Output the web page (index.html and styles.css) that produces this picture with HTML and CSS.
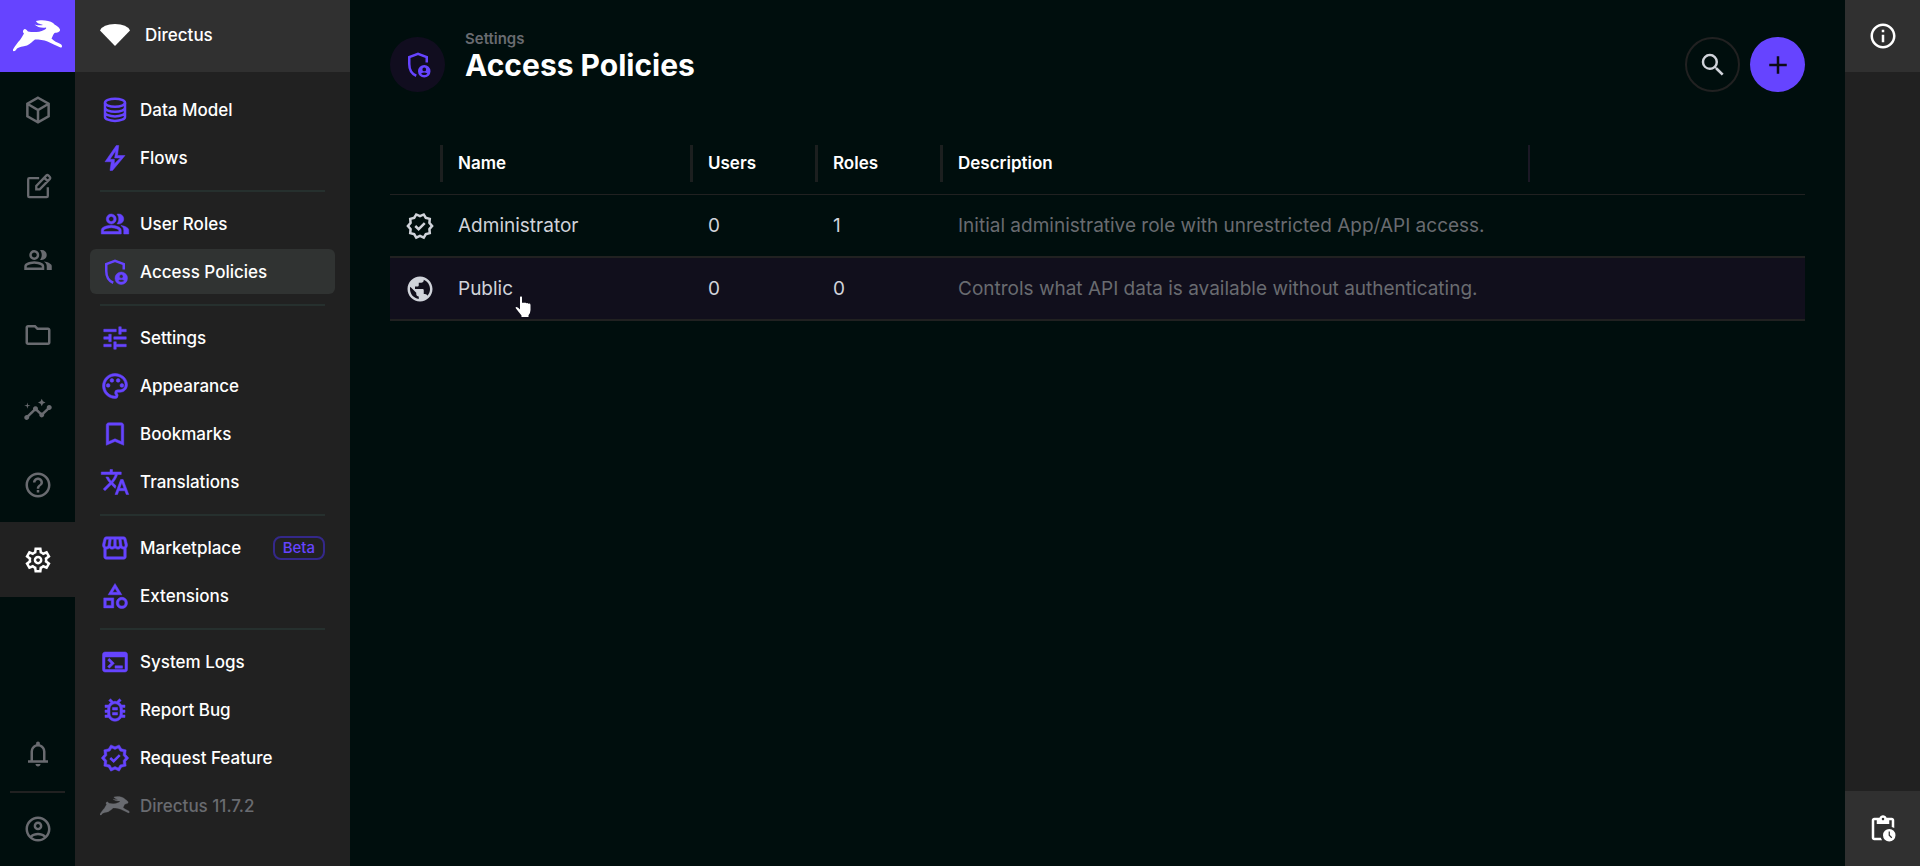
FILE: index.html
```html
<!DOCTYPE html>
<html lang="en">
<head>
    <meta charset="UTF-8">
    <meta name="viewport" content="width=device-width, initial-scale=1.0">
    <title>Access Policies</title>
    <link rel="stylesheet" href="styles.css">
</head>
<body>
    <svg class="sprite" aria-hidden="true">
        <symbol id="rabbit" viewBox="0 0 50 32">
            <path d="M0 29.500C2 26 5 22 7 20 9 17 10 15 11 13.500 9.500 12.500 9.500 9.500 12 9 13.500 9.500 14 10.500 15 11.500 20 12.500 26 12.500 31 10 33 9 33.500 8 33 7.500 29 8.500 24 7 21.500 4.500 25 5.500 28 5.500 30 5 27 4 23.500 3 23 1 27-.5 36-.2 40 3 42 5.500 46 6.500 47 9.500 47.500 12 44 12.500 41.500 13 40 14.500 39.500 17 38.500 18.500 41 21 44 22.500 47.500 24 49.500 25 49.500 28 47.500 27.500 43 25.500 38.500 23.500 34.500 21.500 31 20 26 19.500 22 19.500 19.500 21.500 17 24 14 25.500 9.500 26.500 6.500 27 4 28.500 3 30.500 1.500 31.500 0 31z"/>
        </symbol>
        <symbol id="box" viewBox="0 0 24 24">
            <path class="line" d="M12 2.200 20.500 7v10L12 21.800 3.500 17V7zM3.800 7.200 12 12l8.200-4.800M12 12v9.500"/>
        </symbol>
        <symbol id="edit" viewBox="0 0 24 26">
            <path class="line" d="M13 7H4.500a1 1 0 0 0-1 1v14.500a1 1 0 0 0 1 1h15a1 1 0 0 0 1-1V15M10.500 16.800v-3L19.300 4.700a1.200 1.200 0 0 1 1.600 0l1.400 1.400a1.200 1.200 0 0 1 0 1.600l-8.800 9.100zM17.400 6.600l3 3"/>
        </symbol>
        <symbol id="group" viewBox="0 0 24 24">
            <path d="M1 20v-2.800q0-.85.44-1.560T2.600 14.550q1.550-.78 3.150-1.160T9 13t3.250.39 3.150 1.160q.73.38 1.160 1.090T17 17.200V20H1Zm18 0v-3q0-1.100-.61-2.110T16.650 13.150q1.280.15 2.400.51t2.100.89q.9.5 1.380 1.110T23 17v3h-4ZM9 12q-1.650 0-2.830-1.180T5 8t1.170-2.830T9 4t2.830 1.170T13 8t-1.170 2.830T9 12Zm10-4q0 1.650-1.180 2.830T15 12q-.28 0-.7-.06t-.7-.14q.68-.8 1.040-1.780T15 8t-.36-2.020T13.600 4.200q.35-.13.7-.16T15 4q1.650 0 2.830 1.170T19 8ZM3 18h12v-.8q0-.28-.14-.5t-.36-.35q-1.350-.67-2.730-1.010T9 15t-2.780.34T3.500 16.350q-.23.13-.36.35T3 17.200V18Zm6-8q.83 0 1.410-.59T11 8t-.59-1.410T9 6t-1.410.59T7 8t.59 1.410T9 10Z"/>
        </symbol>
        <symbol id="folder" viewBox="0 0 24 24">
            <path d="M9.170 6l2 2H20v10H4V6h5.170M10 4H4c-1.100 0-1.990.9-1.990 2L2 18c0 1.100.9 2 2 2h16c1.100 0 2-.9 2-2V8c0-1.100-.9-2-2-2h-8l-2-2z"/>
        </symbol>
        <symbol id="insights" viewBox="0 0 24 24">
            <path d="M21 8c-1.450 0-2.260 1.440-1.930 2.510l-3.550 3.560c-.3-.09-.74-.09-1.040 0l-2.550-2.550C12.270 10.450 11.460 9 10 9c-1.450 0-2.270 1.440-1.930 2.520l-4.560 4.550C2.440 15.740 1 16.550 1 18c0 1.100.9 2 2 2 1.450 0 2.260-1.440 1.930-2.510l4.550-4.560c.3.09.74.09 1.040 0l2.550 2.550C12.730 16.550 13.540 18 15 18c1.450 0 2.270-1.440 1.930-2.520l3.560-3.550c1.070.33 2.510-.48 2.510-1.930 0-1.100-.9-2-2-2zM15 9l.94-2.070L18 6l-2.060-.93L15 3l-.92 2.070L12 6l2.080.93zM3.500 11L4 9l2-.5L4 8l-.5-2L3 8l-2 .5L3 9z"/>
        </symbol>
        <symbol id="help" viewBox="0 0 24 24">
            <path d="M11 18h2v-2h-2v2zm1-16C6.480 2 2 6.480 2 12s4.480 10 10 10 10-4.480 10-10S17.520 2 12 2zm0 18c-4.410 0-8-3.590-8-8s3.590-8 8-8 8 3.590 8 8-3.590 8-8 8zm0-14c-2.210 0-4 1.790-4 4h2c0-1.100.9-2 2-2s2 .9 2 2c0 2-3 1.750-3 5h2c0-2.250 3-2.500 3-5 0-2.210-1.790-4-4-4z"/>
        </symbol>
        <symbol id="gear" viewBox="0 0 24 24">
            <path d="M9.250 22l-.4-3.200q-.32-.13-.61-.3t-.56-.38L4.700 19.380l-2.750-4.760 2.580-1.950q-.03-.17-.03-.33v-.68q0-.16.03-.33L1.950 9.380 4.700 4.620l2.980 1.250q.27-.2.57-.37t.6-.3L9.250 2h5.500l.4 3.200q.32.13.61.3t.56.37l2.980-1.250 2.750 4.760-2.580 1.950q.03.17.03.33v.68q0 .16-.05.33l2.580 1.950-2.750 4.760-2.960-1.250q-.27.2-.57.37t-.6.3l-.4 3.200zM11 20h1.970l.35-2.650q.78-.2 1.440-.59t1.210-.93l2.480 1.020.97-1.700-2.150-1.620q.13-.35.18-.74T17.500 12t-.05-.79-.18-.74l2.150-1.620-.97-1.700-2.480 1.050q-.55-.58-1.210-.96t-1.440-.59L13 4h-1.970l-.35 2.650q-.78.2-1.440.59t-1.210.94L5.550 7.150l-.97 1.700 2.150 1.600q-.13.38-.18.75T6.500 12q0 .4.050.78t.18.74l-2.150 1.630.97 1.700 2.480-1.050q.55.570 1.210.960t1.440.590zM12.050 15.500q1.450 0 2.480-1.020T15.550 12t-1.020-2.480T12.050 8.500q-1.480 0-2.490 1.020T8.550 12t1.010 2.480 2.490 1.020zM12.050 13.500q-.63 0-1.060-.44T10.550 12t.44-1.060 1.060-.44 1.060.44T13.550 12t-.44 1.060-1.060.44z" fill-rule="evenodd"/>
        </symbol>
        <symbol id="bell" viewBox="0 0 24 24">
            <path d="M4 19v-2h2v-7q0-2.080 1.250-3.690T10.500 4.200v-.7q0-.63.44-1.060T12 2t1.060.44.44 1.060v.7q2 .5 3.250 2.110T18 10v7h2v2H4Zm8 3q-.83 0-1.410-.59T10 20h4q0 .83-.59 1.410T12 22Zm-4-5h8v-7q0-1.650-1.180-2.830T12 6 9.170 7.170 8 10v7Z"/>
        </symbol>
        <symbol id="account" viewBox="0 0 24 24">
            <path d="M12 2C6.480 2 2 6.480 2 12s4.480 10 10 10 10-4.480 10-10S17.520 2 12 2zM7.350 18.500C8.660 17.560 10.260 17 12 17s3.340.56 4.650 1.500C15.340 19.440 13.740 20 12 20s-3.340-.56-4.650-1.500zm10.790-1.380C16.450 15.800 14.320 15 12 15s-4.450.8-6.140 2.120C4.700 15.730 4 13.950 4 12c0-4.420 3.580-8 8-8s8 3.580 8 8c0 1.950-.7 3.730-1.860 5.120zM12 6c-1.930 0-3.500 1.570-3.500 3.500S10.070 13 12 13s3.500-1.570 3.500-3.500S13.930 6 12 6zm0 5c-.83 0-1.500-.67-1.500-1.500S11.170 8 12 8s1.500.67 1.500 1.500S12.830 11 12 11z"/>
        </symbol>
        <symbol id="database" viewBox="0 0 24 24">
            <ellipse class="line" cx="12" cy="6.200" rx="8" ry="3.200"/>
            <path class="line" d="M4 6.200v11.300c0 1.700 3.600 3.200 8 3.200s8-1.500 8-3.200V6.200M4 10.200c0 1.700 3.600 3.200 8 3.200s8-1.500 8-3.200M4 13.900c0 1.700 3.600 3.200 8 3.200s8-1.500 8-3.200"/>
        </symbol>
        <symbol id="bolt" viewBox="0 0 24 24">
            <path d="M8 22l1-7H4l9-13h2l-1 8h6L10 22zM11.500 16.500 16.300 12h-4.600l.9-5.900L8 13h3.500z" fill-rule="evenodd"/>
        </symbol>
        <symbol id="policy" viewBox="0 0 24 24">
            <path class="line" d="M19 10V5.700L12 3.100 5 5.700v5.400c0 4.300 2.200 8 5.600 9.500"/>
            <path d="M17 12a5 5 0 1 0 0 10 5 5 0 0 0 0-10zm0 2a1.500 1.500 0 1 1 0 3 1.500 1.500 0 0 1 0-3zm0 6c-1 0-1.900-.5-2.500-1.300.7-.4 1.600-.7 2.500-.7s1.800.3 2.500.7c-.6.8-1.500 1.300-2.500 1.300z" fill-rule="evenodd"/>
        </symbol>
        <symbol id="tune" viewBox="0 0 24 24">
            <path d="M3 17v2h6v-2H3zM3 5v2h10V5H3zm10 16v-2h8v-2h-8v-2h-2v6h2zM7 9v2H3v2h4v2h2V9H7zm14 4v-2H11v2h10zm-6-4h2V7h4V5h-4V3h-2v6z"/>
        </symbol>
        <symbol id="palette" viewBox="0 0 24 24">
            <path d="M12 22C6.490 22 2 17.510 2 12S6.490 2 12 2s10 4.040 10 9c0 3.310-2.690 6-6 6h-1.770c-.28 0-.5.22-.5.5 0 .12.05.23.13.33.41.47.64 1.060.64 1.670A2.500 2.500 0 0 1 12 22zm0-18c-4.410 0-8 3.590-8 8s3.590 8 8 8c.28 0 .5-.22.5-.5a.54.54 0 0 0-.14-.35c-.41-.46-.63-1.050-.63-1.650a2.500 2.500 0 0 1 2.500-2.500H16c2.210 0 4-1.790 4-4 0-3.860-3.590-7-8-7z"/>
            <circle cx="6.500" cy="11.500" r="1.500"/>
            <circle cx="9.500" cy="7.500" r="1.500"/>
            <circle cx="14.500" cy="7.500" r="1.500"/>
            <circle cx="17.500" cy="11.500" r="1.500"/>
        </symbol>
        <symbol id="bookmark" viewBox="0 0 24 24">
            <path d="M17 3H7c-1.100 0-2 .9-2 2v16l7-3 7 3V5c0-1.100-.9-2-2-2zm0 15l-5-2.180L7 18V5h10v13z"/>
        </symbol>
        <symbol id="translate" viewBox="0 0 24 24">
            <path d="M12.870 15.070l-2.540-2.510.03-.03c1.740-1.940 2.980-4.170 3.710-6.530H17V4h-7V2H8v2H1v1.990h11.170C11.500 7.920 10.440 9.750 9 11.350 8.070 10.320 7.300 9.190 6.690 8h-2c.73 1.630 1.730 3.170 2.980 4.560l-5.090 5.020L4 19l5-5 3.110 3.110.76-2.040zM18.500 10h-2L12 22h2l1.120-3h4.750L21 22h2l-4.500-12zm-2.620 7l1.620-4.330L19.120 17h-3.240z"/>
        </symbol>
        <symbol id="store" viewBox="0 0 24 24">
            <path d="M21.900 8.890l-1.050-4.370c-.22-.9-1-1.520-1.910-1.520H5.050c-.9 0-1.690.63-1.900 1.520L2.100 8.890c-.24 1.020-.02 2.060.62 2.880.08.11.19.19.28.29V19c0 1.100.9 2 2 2h14c1.100 0 2-.9 2-2v-6.940c.09-.09.2-.18.28-.28.64-.82.87-1.870.62-2.890zm-2.990-3.900l1.050 4.370c.1.420.01.84-.25 1.170-.14.18-.44.47-.94.47-.61 0-1.140-.49-1.210-1.140L16.980 5l1.930-.01zM13 5h1.960l.54 4.520c.05.39-.07.78-.33 1.070-.22.26-.54.41-.95.41-.67 0-1.220-.59-1.220-1.310V5zM8.490 9.520L9.040 5H11v4.690c0 .72-.55 1.310-1.290 1.310-.34 0-.65-.15-.89-.41a1.400 1.400 0 0 1-.33-1.070zm-4.450-.16L5.050 5h1.970l-.58 4.860c-.08.65-.6 1.140-1.210 1.140-.49 0-.8-.29-.93-.47-.27-.32-.36-.75-.26-1.170zM5 19v-6.030c.08.010.15.030.23.030.87 0 1.660-.36 2.240-.95.6.6 1.400.95 2.310.95.870 0 1.650-.36 2.230-.93.590.57 1.390.93 2.290.93.840 0 1.640-.35 2.240-.95.58.59 1.370.95 2.240.95.080 0 .15-.02.23-.03V19H5z"/>
        </symbol>
        <symbol id="category" viewBox="0 0 24 24">
            <path d="M12 2l-5.500 9h11L12 2zm0 3.840L13.930 9h-3.870L12 5.840zM17.500 13c-2.490 0-4.500 2.010-4.500 4.500s2.010 4.500 4.500 4.500 4.500-2.010 4.500-4.500-2.010-4.500-4.500-4.500zm0 7a2.500 2.500 0 0 1 0-5 2.500 2.500 0 0 1 0 5zM3 21.500h8v-8H3v8zm2-6h4v4H5v-4z"/>
        </symbol>
        <symbol id="terminal" viewBox="0 0 24 24">
            <path d="M20 4H4c-1.110 0-2 .9-2 2v12c0 1.100.89 2 2 2h16c1.100 0 2-.9 2-2V6c0-1.100-.89-2-2-2zm0 14H4V8h16v10zm-2-1h-6v-2h6v2zM7.500 17l-1.410-1.410L8.670 13l-2.590-2.590L7.500 9l4 4-4 4z"/>
        </symbol>
        <symbol id="bug" viewBox="0 0 24 24">
            <path d="M20 8h-2.810c-.45-.78-1.070-1.450-1.820-1.960L17 4.410 15.590 3l-2.170 2.170C12.960 5.060 12.490 5 12 5s-.96.06-1.410.17L8.410 3 7 4.410l1.620 1.630C7.880 6.550 7.260 7.220 6.810 8H4v2h2.090c-.05.33-.09.66-.09 1v1H4v2h2v1c0 .34.04.67.09 1H4v2h2.810c1.040 1.790 2.970 3 5.190 3s4.150-1.210 5.190-3H20v-2h-2.090c.05-.33.09-.66.09-1v-1h2v-2h-2v-1c0-.34-.04-.67-.09-1H20V8zm-4 7c0 2.210-1.790 4-4 4s-4-1.790-4-4v-4c0-2.210 1.790-4 4-4s4 1.790 4 4v4zm-6-1h4v2h-4zm0-4h4v2h-4z"/>
        </symbol>
        <symbol id="verified" viewBox="0 0 24 24">
            <path d="M23 12l-2.440-2.790.34-3.700-3.610-.82L15.400 1.500 12 2.960 8.600 1.500 6.710 4.690 3.100 5.500l.34 3.700L1 12l2.440 2.790-.34 3.700 3.610.82 1.890 3.190 3.400-1.460 3.400 1.460 1.890-3.190 3.610-.82-.34-3.690zm-3.950 1.470l-.56.65.26 2.800-2.740.62-1.430 2.420L12 18.850l-2.580 1.110-1.430-2.410-2.740-.62.26-2.810L3.670 12l1.850-2.130-.27-2.800 2.740-.62 1.430-2.420L12 5.140l2.580-1.110 1.430 2.420 2.740.62-.26 2.800L20.330 12z" fill-rule="evenodd"/>
            <path class="line" d="M8.200 12l2.700 2.600 4.900-4.900"/>
        </symbol>
        <symbol id="globe" viewBox="0 0 24 24">
            <path d="M12 2C6.480 2 2 6.480 2 12s4.480 10 10 10 10-4.480 10-10S17.520 2 12 2zm-1 17.930c-3.950-.49-7-3.850-7-7.930 0-.62.08-1.210.21-1.790L9 15v1c0 1.100.9 2 2 2v1.930zm6.900-2.540c-.26-.81-1-1.390-1.900-1.390h-1v-3c0-.55-.45-1-1-1H8v-2h2c.55 0 1-.45 1-1V7h2c1.100 0 2-.9 2-2v-.41c2.930 1.190 5 4.060 5 7.410 0 2.080-.8 3.970-2.100 5.390z"/>
        </symbol>
        <symbol id="search" viewBox="0 0 24 24">
            <path d="M15.500 14h-.79l-.28-.27A6.470 6.470 0 0 0 16 9.500 6.500 6.500 0 1 0 9.500 16c1.610 0 3.090-.59 4.230-1.570l.27.28v.79l5 4.990L20.490 19l-4.990-5zm-6 0C7.010 14 5 11.990 5 9.500S7.010 5 9.500 5 14 7.010 14 9.500 11.990 14 9.500 14z"/>
        </symbol>
        <symbol id="plus" viewBox="0 0 24 24">
            <path d="M5 11h6V5h2v6h6v2h-6v6h-2v-6H5z"/>
        </symbol>
        <symbol id="info" viewBox="0 0 24 24">
            <path d="M11 7h2v2h-2zm0 4h2v6h-2zm1-9C6.480 2 2 6.480 2 12s4.480 10 10 10 10-4.480 10-10S17.520 2 12 2zm0 18c-4.410 0-8-3.590-8-8s3.590-8 8-8 8 3.590 8 8-3.590 8-8 8z"/>
        </symbol>
        <symbol id="activity" viewBox="0 0 24 24">
            <path d="M17 22q-2.080 0-3.540-1.460T12 17t1.460-3.540T17 12t3.540 1.460T22 17t-1.460 3.540T17 22Zm1.680-2.630.7-.7L17.500 16.800V14h-1v3.200l2.180 2.170ZM5 21q-.83 0-1.410-.59T3 19V5q0-.83.59-1.410T5 3h4.180q.28-.88 1.070-1.440T12 1q1 0 1.790.56T14.850 3H19q.83 0 1.410.59T21 5v6.250q-.45-.33-.95-.55T19 10.300V5h-2v3H7V5H5v14h5.300q.18.55.4 1.050t.55.95H5Zm7-16q.43 0 .71-.29T13 4t-.29-.71T12 3t-.71.29T11 4t.29.71T12 5Z"/>
        </symbol>
    </svg>

    <div class="app">
        <aside class="module-bar">
            <a class="logo" href="#" aria-label="Home"><svg><use href="#rabbit"/></svg></a>
            <nav class="modules">
                <a class="module" href="#" aria-label="Content"><svg class="icon"><use href="#box"/></svg></a>
                <a class="module" href="#" aria-label="Editor"><svg class="icon"><use href="#edit"/></svg></a>
                <a class="module" href="#" aria-label="Users"><svg class="icon"><use href="#group"/></svg></a>
                <a class="module" href="#" aria-label="Files"><svg class="icon"><use href="#folder"/></svg></a>
                <a class="module" href="#" aria-label="Insights"><svg class="icon"><use href="#insights"/></svg></a>
                <a class="module" href="#" aria-label="Help"><svg class="icon"><use href="#help"/></svg></a>
                <a class="module active" href="#" aria-label="Settings"><svg class="icon"><use href="#gear"/></svg></a>
            </nav>
            <div class="account">
                <button class="module" aria-label="Notifications"><svg class="icon"><use href="#bell"/></svg></button>
                <hr>
                <a class="module" href="#" aria-label="Account"><svg class="icon"><use href="#account"/></svg></a>
            </div>
        </aside>

        <div class="navigation">
            <div class="project">
                <svg class="icon" viewBox="0 0 30 30"><path d="M0 10.500Q3 4 15 4t15 6.500L15 26z"/></svg>
                <span>Directus</span>
            </div>
            <nav class="nav-list">
                <a class="nav-item" href="#"><svg class="icon"><use href="#database"/></svg>Data Model</a>
                <a class="nav-item" href="#"><svg class="icon"><use href="#bolt"/></svg>Flows</a>
                <hr>
                <a class="nav-item" href="#"><svg class="icon"><use href="#group"/></svg>User Roles</a>
                <a class="nav-item active" href="#"><svg class="icon"><use href="#policy"/></svg>Access Policies</a>
                <hr>
                <a class="nav-item" href="#"><svg class="icon"><use href="#tune"/></svg>Settings</a>
                <a class="nav-item" href="#"><svg class="icon"><use href="#palette"/></svg>Appearance</a>
                <a class="nav-item" href="#"><svg class="icon"><use href="#bookmark"/></svg>Bookmarks</a>
                <a class="nav-item" href="#"><svg class="icon"><use href="#translate"/></svg>Translations</a>
                <hr>
                <a class="nav-item" href="#"><svg class="icon"><use href="#store"/></svg>Marketplace<span class="chip">Beta</span></a>
                <a class="nav-item" href="#"><svg class="icon"><use href="#category"/></svg>Extensions</a>
                <hr>
                <a class="nav-item" href="#"><svg class="icon"><use href="#terminal"/></svg>System Logs</a>
                <a class="nav-item" href="#"><svg class="icon"><use href="#bug"/></svg>Report Bug</a>
                <a class="nav-item" href="#"><svg class="icon"><use href="#verified"/></svg>Request Feature</a>
                <a class="nav-item version" href="#"><svg class="icon"><use href="#rabbit"/></svg>Directus 11.7.2</a>
            </nav>
        </div>

        <main class="content">
            <header class="page-header">
                <div class="page-icon"><svg class="icon"><use href="#policy"/></svg></div>
                <div class="page-title">
                    <a href="#">Settings</a>
                    <h1>Access Policies</h1>
                </div>
                <div class="actions">
                    <button class="round-btn outline" aria-label="Search"><svg class="icon"><use href="#search"/></svg></button>
                    <button class="round-btn" aria-label="Create policy"><svg class="icon"><use href="#plus"/></svg></button>
                </div>
            </header>

            <table class="policies">
                <colgroup>
                    <col class="col-icon">
                    <col class="col-name">
                    <col class="col-count">
                    <col class="col-count">
                    <col class="col-description">
                    <col>
                </colgroup>
                <thead>
                    <tr>
                        <th><div class="head"></div></th>
                        <th><div class="head">Name</div></th>
                        <th><div class="head">Users</div></th>
                        <th><div class="head">Roles</div></th>
                        <th><div class="head last">Description</div></th>
                        <th></th>
                    </tr>
                </thead>
                <tbody>
                    <tr>
                        <td><svg class="icon"><use href="#verified"/></svg></td>
                        <td>Administrator</td>
                        <td>0</td>
                        <td>1</td>
                        <td class="muted">Initial administrative role with unrestricted App/API access.</td>
                        <td></td>
                    </tr>
                    <tr class="hovered">
                        <td><svg class="icon"><use href="#globe"/></svg></td>
                        <td class="pointed">Public
                            <svg class="pointer" viewBox="0 0 16 22"><path d="M5 1.200Q6-.5 7 1.200V7q1-1.200 2 0 1-1 2.200.3 1.200-1 2.300.5 1.800-.7 2 1.200v5q0 3-2 5.200V21H6.500v-1.500L1 12.500Q0 11 1.500 11q1.500.2 3.500 2.500z"/></svg>
                        </td>
                        <td>0</td>
                        <td>0</td>
                        <td class="muted">Controls what API data is available without authenticating.</td>
                        <td></td>
                    </tr>
                </tbody>
            </table>
        </main>

        <aside class="sidebar">
            <button class="side-btn" aria-label="Information"><svg class="icon"><use href="#info"/></svg></button>
            <button class="side-btn bottom" aria-label="Activity log"><svg class="icon"><use href="#activity"/></svg></button>
        </aside>
    </div>
</body>
</html>
```

FILE: styles.css
```css
* {
    box-sizing: border-box;
}

body {
    margin: 0;
    background-color: #000e0d;
    color: #ffffff;
    font-family: Inter, "Liberation Sans", sans-serif;
    font-size: 17px;
}

a {
    color: inherit;
    text-decoration: none;
}

button {
    padding: 0;
    border: none;
    background: none;
    color: inherit;
    cursor: pointer;
}

hr {
    margin: 0;
    border: none;
    border-top: 2px solid #26302e;
}

.sprite {
    position: absolute;
    width: 0;
    height: 0;
}

.icon {
    width: 30px;
    height: 30px;
    flex-shrink: 0;
    display: block;
    fill: currentColor;
}

.line {
    fill: none;
    stroke: currentColor;
    stroke-width: 2;
}

.app {
    display: flex;
    min-height: 100vh;
}

/* module bar */
.module-bar {
    width: 75px;
    display: flex;
    flex-direction: column;
}

.logo {
    height: 72px;
    display: flex;
    align-items: center;
    justify-content: center;
    background-color: #6644ff;
}

.logo svg {
    width: 50px;
    height: 32px;
    fill: #ffffff;
}

.module {
    width: 75px;
    height: 75px;
    display: flex;
    align-items: center;
    justify-content: center;
    color: #696b70;
}

.module.active {
    background-color: #212121;
    color: #ffffff;
}

.account {
    margin-top: auto;
}

.account hr {
    margin: 0 10px -2px;
    border-color: #212121;
}

/* navigation */
.navigation {
    width: 275px;
    background-color: #212121;
}

.project {
    height: 72px;
    padding: 0 25px 2px;
    display: flex;
    align-items: center;
    gap: 15px;
    background-color: #303030;
    font-weight: 500;
}

.nav-list {
    padding: 15px;
    display: flex;
    flex-direction: column;
    gap: 3px;
}

.nav-list hr {
    margin: 7px 10px 6px;
}

.nav-item {
    height: 45px;
    padding: 0 10px;
    display: flex;
    align-items: center;
    gap: 10px;
    border-radius: 6px;
    font-weight: 500;
}

.nav-item .icon {
    color: #6644ff;
    stroke: currentColor;
    stroke-width: 0.4;
}

.nav-item.active {
    background-color: #303332;
}

.nav-item.version,
.nav-item.version .icon {
    color: #696b70;
}

.chip {
    height: 24px;
    margin-left: auto;
    padding: 0 8px;
    border: 2px solid #34288a;
    border-radius: 8px;
    color: #6644ff;
    font-size: 15px;
    line-height: 20px;
}

/* page */
.content {
    flex: 1;
    min-width: 0;
    padding: 37px 40px;
}

.page-header {
    height: 55px;
    display: flex;
    align-items: center;
}

.page-icon,
.round-btn {
    width: 55px;
    height: 55px;
    display: flex;
    align-items: center;
    justify-content: center;
    border-radius: 50%;
}

.page-icon {
    background-color: #110d1f;
    color: #6644ff;
}

.page-title {
    margin-left: 20px;
}

.page-title a {
    display: block;
    color: #696b70;
    font-size: 15px;
    font-weight: 600;
    line-height: 16px;
}

.page-title h1 {
    margin: 0 0 16px;
    font-size: 30px;
    font-weight: 700;
    line-height: 36px;
}

.actions {
    margin-left: auto;
    display: flex;
    gap: 10px;
}

.round-btn {
    background-color: #6644ff;
    color: #0d0b16;
}

.round-btn.outline {
    border: 2px solid #212121;
    background: none;
    color: #d0d3da;
}

.policies {
    width: 100%;
    margin-top: 40px;
    border-collapse: separate;
    border-spacing: 0;
    table-layout: fixed;
    color: #d0d3da;
    font-size: 19px;
}

.col-icon {
    width: 53px;
}

.col-name {
    width: 250px;
}

.col-count {
    width: 125px;
}

.col-description {
    width: 587px;
}

.policies th {
    height: 63px;
    padding: 0;
    border-bottom: 1px solid #212121;
    color: #ffffff;
    font-size: 17px;
    font-weight: 600;
    text-align: left;
}

.head {
    height: 37px;
    padding-left: 15px;
    display: flex;
    align-items: center;
    border-right: 3px solid #1c1f1f;
}

.head.last {
    border-right: 2px solid #1b1825;
}

.policies td {
    height: 63px;
    padding: 0 0 0 15px;
    border-bottom: 2px solid #212121;
}

.policies .muted {
    color: #696b70;
}

.hovered td {
    background-color: #110f1c;
}

.pointed {
    position: relative;
}

.pointer {
    position: absolute;
    top: 38px;
    left: 72px;
    width: 16px;
    height: 22px;
    fill: #ffffff;
}

/* right sidebar */
.sidebar {
    width: 75px;
    display: flex;
    flex-direction: column;
    justify-content: space-between;
    background-color: #212121;
}

.side-btn {
    height: 72px;
    display: flex;
    align-items: center;
    justify-content: center;
    background-color: #303030;
}

.side-btn.bottom {
    height: 75px;
}
```
